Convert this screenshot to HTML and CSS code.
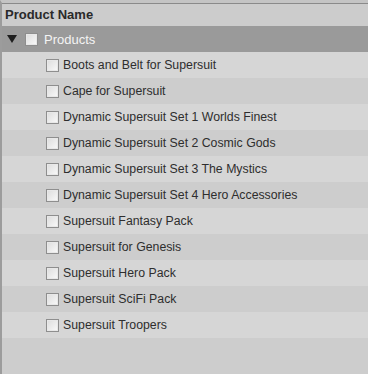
FILE: index.html
```html
<!DOCTYPE html>
<html lang="en">
<head>
    <meta charset="UTF-8">
    <title>Products</title>
    <link rel="stylesheet" href="styles.css">
</head>
<body>
    <div class="panel">
        <div class="header">Product Name</div>

        <div class="group-row">
            <span class="arrow"></span>
            <span class="check"></span>
            <span class="group-label">Products</span>
        </div>

        <ul class="items">
            <li><span class="check"></span>Boots and Belt for Supersuit</li>
            <li><span class="check"></span>Cape for Supersuit</li>
            <li><span class="check"></span>Dynamic Supersuit Set 1 Worlds Finest</li>
            <li><span class="check"></span>Dynamic Supersuit Set 2 Cosmic Gods</li>
            <li><span class="check"></span>Dynamic Supersuit Set 3 The Mystics</li>
            <li><span class="check"></span>Dynamic Supersuit Set 4 Hero Accessories</li>
            <li><span class="check"></span>Supersuit Fantasy Pack</li>
            <li><span class="check"></span>Supersuit for Genesis</li>
            <li><span class="check"></span>Supersuit Hero Pack</li>
            <li><span class="check"></span>Supersuit SciFi Pack</li>
            <li><span class="check"></span>Supersuit Troopers</li>
        </ul>
    </div>
</body>
</html>
```

FILE: styles.css
```css
body {
    margin: 0;
    padding: 0;
    font-family: "Liberation Sans", Arial, sans-serif;
    background-color: #cdcdcd;
}

.panel {
    height: 374px;
    box-sizing: border-box;
    border-top: 3px solid #c4c4c4;
    border-left: 2px solid #9c9c9c;
    background-color: #cdcdcd;
}

.header {
    height: 22px;
    border-top: 1px solid #8a8a8a;
    padding-left: 3px;
    font-size: 13px;
    font-weight: bold;
    line-height: 22px;
    color: #2a2a2a;
    background-color: #cccccc;
}

.group-row {
    height: 26px;
    display: flex;
    align-items: center;
    background-color: #9a9a9a;
}

.arrow {
    width: 0;
    height: 0;
    margin-left: 5px;
    margin-right: 8px;
    border-left: 5px solid transparent;
    border-right: 5px solid transparent;
    border-top: 8px solid #1e1e1e;
}

.check {
    width: 11px;
    height: 11px;
    border: 1px solid #8e8e8e;
    background: linear-gradient(135deg, #dcdcdc, #fafafa);
    box-shadow: inset 0 0 0 1px #e8e8e8;
    flex-shrink: 0;
}

.group-label {
    margin-left: 6px;
    padding-top: 1px;
    font-size: 13px;
    color: #f4f4f4;
}

.items {
    list-style: none;
    margin: 0;
    padding: 0;
}

.items li {
    height: 26px;
    display: flex;
    align-items: center;
    padding-left: 44px;
    font-size: 12.3px;
    color: #2e2e2e;
    background-color: #cdcdcd;
}

.items li:nth-child(odd) {
    background-color: #d6d6d6;
}

.items li .check {
    margin-right: 4px;
}
```
